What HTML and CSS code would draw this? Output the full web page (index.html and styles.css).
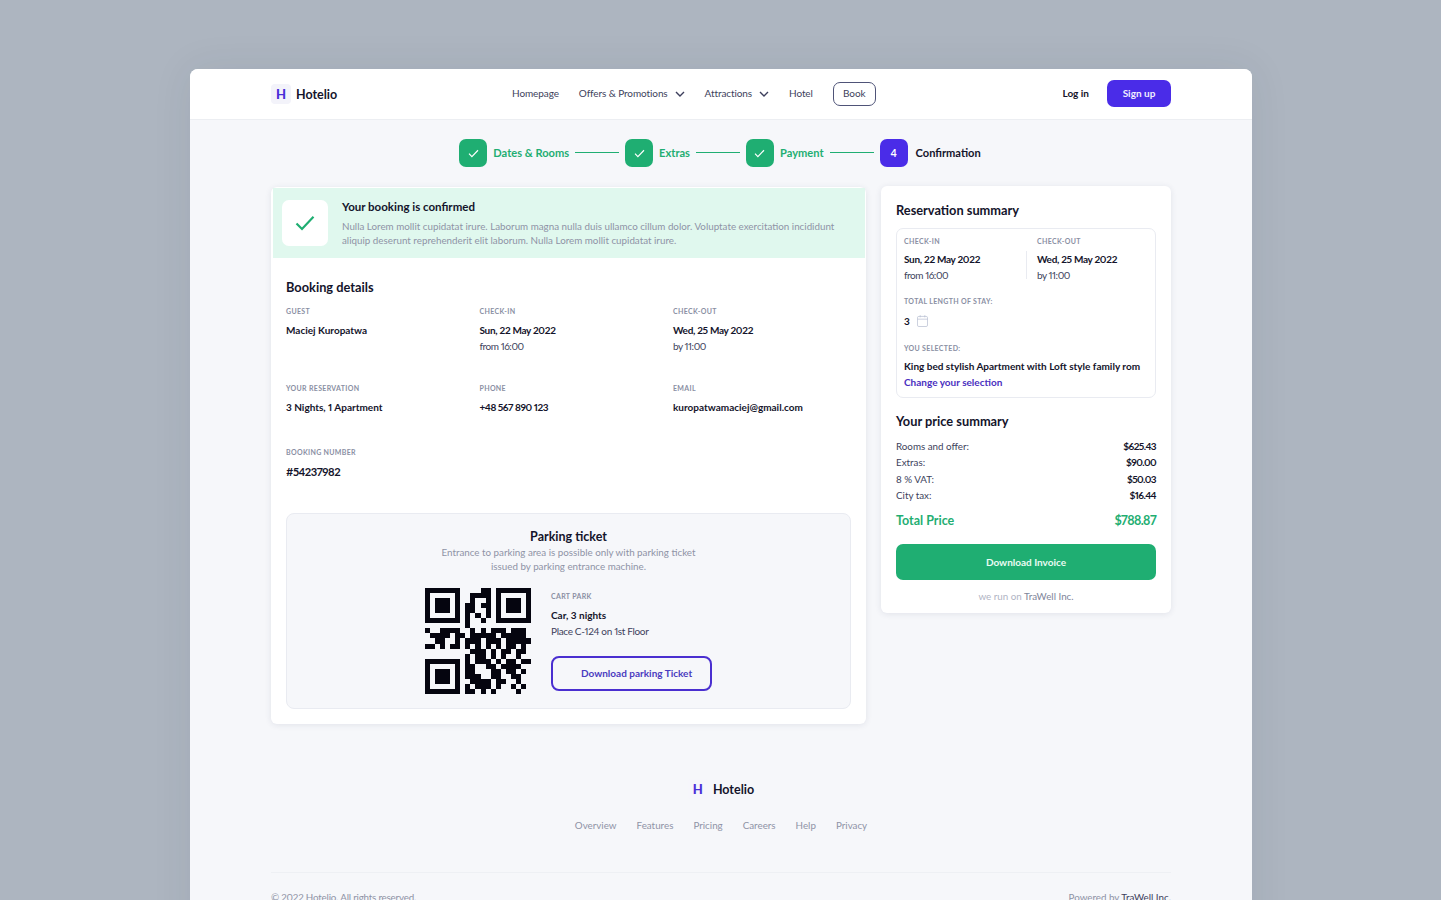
FILE: index.html
```html
<!DOCTYPE html>
<html lang="en">
<head>
<meta charset="utf-8">
<title>Hotelio - Booking confirmed</title>
<link rel="stylesheet" href="styles.css">
</head>
<body>
<div class="app">
  <header class="topbar">
    <div class="wrap topbar-in">
      <a class="logo logo-top"><span class="logo-mark">H</span><span class="logo-name">Hotelio</span></a>
      <nav class="nav">
        <a>Homepage</a>
        <a class="drop">Offers &amp; Promotions <svg class="chev" viewBox="0 0 10 6"><path d="M1 1l4 4 4-4"/></svg></a>
        <a class="drop">Attractions <svg class="chev" viewBox="0 0 10 6"><path d="M1 1l4 4 4-4"/></svg></a>
        <a>Hotel</a>
        <a class="book">Book</a>
      </nav>
      <div class="auth">
        <a class="login">Log in</a>
        <a class="signup">Sign up</a>
      </div>
    </div>
  </header>

  <ol class="steps">
    <li class="step done"><span class="step-ico"><svg viewBox="0 0 12 10"><path d="M1 5.2l3.2 3.2L11 1.4"/></svg></span><span class="step-txt">Dates &amp; Rooms</span></li>
    <li class="step-line"></li>
    <li class="step done"><span class="step-ico"><svg viewBox="0 0 12 10"><path d="M1 5.2l3.2 3.2L11 1.4"/></svg></span><span class="step-txt">Extras</span></li>
    <li class="step-line"></li>
    <li class="step done"><span class="step-ico"><svg viewBox="0 0 12 10"><path d="M1 5.2l3.2 3.2L11 1.4"/></svg></span><span class="step-txt">Payment</span></li>
    <li class="step-line"></li>
    <li class="step current"><span class="step-ico">4</span><span class="step-txt">Confirmation</span></li>
  </ol>

  <main class="wrap content">
    <section class="card card-main">
      <div class="banner">
        <div class="banner-ico"><svg viewBox="0 0 20 16"><path d="M1.5 8.500l5.500 5.500L18.500 1.800"/></svg></div>
        <div class="banner-txt">
          <h2>Your booking is confirmed</h2>
          <p>Nulla Lorem mollit cupidatat irure. Laborum magna nulla duis ullamco cillum dolor. Voluptate exercitation incididunt aliquip deserunt reprehenderit elit laborum. Nulla Lorem mollit cupidatat irure.</p>
        </div>
      </div>
      <div class="details">
        <h3 class="h">Booking details</h3>
        <div class="grid">
          <div class="cell"><div class="lbl">GUEST</div><div class="val">Maciej Kuropatwa</div></div>
          <div class="cell"><div class="lbl">CHECK-IN</div><div class="val tight">Sun, 22 May 2022</div><div class="sub">from 16:00</div></div>
          <div class="cell"><div class="lbl">CHECK-OUT</div><div class="val tight">Wed, 25 May 2022</div><div class="sub">by 11:00</div></div>
          <div class="cell"><div class="lbl">YOUR RESERVATION</div><div class="val">3 Nights, 1 Apartment</div></div>
          <div class="cell"><div class="lbl">PHONE</div><div class="val tighter">+48 567 890 123</div></div>
          <div class="cell"><div class="lbl">EMAIL</div><div class="val">kuropatwamaciej@gmail.com</div></div>
        </div>
        <div class="number"><div class="lbl">BOOKING NUMBER</div><div class="num">#54237982</div></div>
      </div>
      <div class="parking">
        <h3 class="park-h">Parking ticket</h3>
        <p class="park-p">Entrance to parking area is possible only with parking ticket<br>issued by parking entrance machine.</p>
        <div class="park-row">
          <svg class="qr" viewBox="0 0 21 21" shape-rendering="crispEdges">
            <path class="qr-f" d="M0 0h7v7H0zM1 1v5h5V1zM2 2h3v3H2zM14 0h7v7h-7zM15 1v5h5V1zM16 2h3v3h-3zM0 14h7v7H0zM1 15v5h5v-5zM2 16h3v3H2z"/>
            <path class="qr-d" d="M11 .5h2M9 1.500h4M9 2.500h1M12 2.500h1M8 3.500h2M11 3.500h2M8 4.500h2M12 4.500h1M8 5.500h1M10 5.500h1M12 5.500h1M8 6.500h1M11 6.500h1M8 7.500h1M0 8.500h1M3 8.500h4M9 8.500h1M11 8.500h1M13 8.500h3M17 8.500h3M1 9.500h4M6 9.500h2M9 9.500h5M15 9.500h5M2 10.500h2M6 10.500h1M8 10.500h3M12 10.500h3M16 10.500h5M0 11.500h2M3 11.500h1M5 11.500h2M8 11.500h1M10 11.500h1M12 11.500h1M14 11.500h1M16 11.500h2M19 11.500h1M9 12.500h3M13 12.500h1M15 12.500h2M18 12.500h2M8 13.500h1M10 13.500h2M13 13.500h1M15 13.500h1M18 13.500h1M8 14.500h1M10 14.500h3M14 14.500h1M16 14.500h2M19 14.500h2M8 15.500h2M12 15.500h2M15 15.500h4M8 16.500h2M13 16.500h2M16 16.500h2M19 16.500h1M8 17.500h3M13 17.500h2M17 17.500h2M9 18.500h4M14 18.500h2M18 18.500h1M8 19.500h1M10 19.500h3M14 19.500h1M17 19.500h1M19 19.500h1M8 20.500h2M11 20.500h1M13 20.500h1M18 20.500h1"/>
          </svg>
          <div class="park-info">
            <div class="lbl">CART PARK</div>
            <div class="val">Car, 3 nights</div>
            <div class="sub sub-place">Place C-124 on 1st Floor</div>
            <a class="btn-outline">Download parking Ticket</a>
          </div>
        </div>
      </div>
    </section>

    <aside class="card card-side">
      <h3 class="h">Reservation summary</h3>
      <div class="res">
        <div class="res-dates">
          <div class="res-col"><div class="lbl">CHECK-IN</div><div class="val tight">Sun, 22 May 2022</div><div class="sub">from 16:00</div></div>
          <div class="res-col res-col2"><div class="lbl">CHECK-OUT</div><div class="val tight">Wed, 25 May 2022</div><div class="sub">by 11:00</div></div>
        </div>
        <div class="lbl res-l2">TOTAL LENGTH OF STAY:</div>
        <div class="stay"><span>3</span><svg class="cal" viewBox="0 0 12 13"><rect x=".5" y="1.500" width="11" height="11" rx="1.500"/><path d="M.5 4.500h11M3.500 .2v2.300M8.500 .2v2.300"/></svg></div>
        <div class="lbl res-l3">YOU SELECTED:</div>
        <div class="val res-room">King bed stylish Apartment with Loft style family rom</div>
        <a class="change">Change your selection</a>
      </div>
      <h3 class="h h-price">Your price summary</h3>
      <div class="prices">
        <div class="price"><span>Rooms and offer:</span><b>$625.43</b></div>
        <div class="price"><span>Extras:</span><b>$90.00</b></div>
        <div class="price"><span>8 % VAT:</span><b>$50.03</b></div>
        <div class="price"><span>City tax:</span><b>$16.44</b></div>
      </div>
      <div class="total"><span>Total Price</span><span class="total-v">$788.87</span></div>
      <a class="btn-green">Download Invoice</a>
      <div class="run">we run on <span>TraWell Inc.</span></div>
    </aside>
  </main>

  <footer class="wrap footer">
    <a class="logo logo-foot"><span class="logo-mark">H</span><span class="logo-name">Hotelio</span></a>
    <nav class="foot-nav"><a>Overview</a><a>Features</a><a>Pricing</a><a>Careers</a><a>Help</a><a>Privacy</a></nav>
    <div class="foot-bottom"><span class="copy">© 2022 Hotelio. All rights reserved.</span><span>Powered by <b>TraWell Inc.</b></span></div>
  </footer>
</div>
</body>
</html>
```
FILE: styles.css
```css
* { box-sizing: border-box; }
html, body { margin: 0; height: 900px; overflow: hidden; }
body { background: #adb5c0; font-family: "Lato", "Noto Sans", sans-serif; color: #14142b; font-size: 11px; font-variant-numeric: proportional-nums; }
h2, h3, p, ol { margin: 0; padding: 0; }
a { color: inherit; text-decoration: none; }
.app { width: 1062px; margin: 69px 0 0 190px; background: #f6f7fa; border-radius: 8px 8px 0 0; box-shadow: 0 0 40px rgba(40,50,70,.08); height: 900px; }
.wrap { width: 900px; margin: 0 auto; }

.topbar { height: 51px; background: #fff; border-bottom: 1px solid #eceef2; border-radius: 8px 8px 0 0; }
.topbar-in { display: flex; align-items: center; height: 50px; }
.logo { display: flex; align-items: center; font-weight: 700; font-size: 12.500px; }
.logo-top { width: 241px; }
.logo-mark { width: 20px; height: 20px; border-radius: 4px; background: #f3f3fa; color: #4a2fd8; display: flex; align-items: center; justify-content: center; font-size: 13px; font-weight: 900; margin-right: 5px; }
.nav { display: flex; align-items: center; gap: 20px; color: #3d3f5c; font-size: 10px; letter-spacing: -.1px; }
.nav > a { padding-bottom: 2px; }
.drop { display: flex; align-items: center; }
.chev { width: 10px; height: 6px; margin-left: 7px; margin-top: 2px; fill: none; stroke: #3d3f5c; stroke-width: 1.400; }
.nav > .book { height: 24px; width: 43px; margin-top: -1px; border: 1px solid #4f5478; border-radius: 7px; display: flex; align-items: center; justify-content: center; }
.auth { margin-left: auto; display: flex; align-items: center; gap: 18px; font-size: 10px; font-weight: 700; }
.login { padding-bottom: 2px; }
.signup { width: 64px; height: 27px; margin-top: -1px; padding-bottom: 1px; background: #4a2ce8; color: #f0eeff; border-radius: 7px; display: flex; align-items: center; justify-content: center; }

.steps { list-style: none; display: flex; align-items: center; justify-content: center; height: 28px; margin: 19px 0 0 -2px; font-size: 11.100px; font-weight: 700; }
.step { display: flex; align-items: center; gap: 6px; }
.step-txt { padding-bottom: 2px; }
.done { color: #1fae72; }
.current { gap: 8px; }
.step-ico { width: 28px; height: 28px; border-radius: 7px; display: flex; align-items: center; justify-content: center; background: #1fae72; color: #fff; font-size: 10.500px; }
.step-ico svg { width: 11px; height: 9px; fill: none; stroke: #fff; stroke-width: 1.300; }
.current .step-ico { background: #4a2ce8; }
.step-line { width: 44px; height: 1.500px; background: #1fae72; margin: 0 6px 1px; }

.content { display: flex; align-items: flex-start; gap: 15px; margin-top: 19px; }
.card { background: #fff; border-radius: 6px; box-shadow: 0 1px 6px rgba(40,50,90,.1); }
.card-main { width: 595px; height: 537px; margin-top: 1px; padding: 1px 1px 0 2px; }
.card-side { width: 290px; height: 427px; padding: 17px 15px 0; }

.banner { height: 70px; background: #e0f8ee; display: flex; padding-left: 9px; padding-top: 12px; }
.banner-ico { width: 46px; height: 46px; border-radius: 7px; background: #fff; display: flex; align-items: center; justify-content: center; margin-right: 14px; }
.banner-ico svg { width: 20px; height: 16px; fill: none; stroke: #1fae72; stroke-width: 2.200; }
.banner-txt { width: 505px; margin-top: -1px; }
.banner-txt h2 { font-size: 11.500px; font-weight: 700; line-height: 16px; margin-bottom: 4px; }
.banner-txt p { font-size: 9.800px; line-height: 14px; color: #8f93a6; }

.details { padding: 22px 0 0 13px; }
.h { font-size: 12.800px; font-weight: 700; line-height: 14px; padding-bottom: 2px; }
.grid { display: grid; grid-template-columns: 193.500px 193.500px 160px; grid-auto-rows: 77px; margin-top: 11px; }
.lbl { font-size: 7px; letter-spacing: .33px; line-height: 10px; color: #8a8fa3; font-weight: 700; }
.cell .lbl, .number .lbl { line-height: 8px; padding-bottom: 2px; }
.val { font-size: 10px; font-weight: 700; line-height: 16px; margin-top: 5px; }
.tight { letter-spacing: -.3px; }
.tighter { letter-spacing: -.45px; }
.sub { font-size: 10px; line-height: 16px; color: #3d3f5c; letter-spacing: -.45px; }
.sub-place { letter-spacing: -.33px; }
.number { margin-top: -13px; }
.num { font-size: 11.200px; font-weight: 700; line-height: 16px; margin-top: 6px; letter-spacing: -.45px; }

.parking { width: 565px; height: 196px; margin: 33px 0 0 13px; background: #f6f7fa; border: 1px solid #e9ebf1; border-radius: 8px; padding-top: 15px; text-align: center; }
.park-h { font-size: 12.500px; font-weight: 700; line-height: 15px; padding-bottom: 1px; }
.park-p { font-size: 9.800px; line-height: 14px; color: #8f93a6; margin-top: 0; }
.park-row { display: flex; margin-top: 15px; padding-left: 138px; text-align: left; }
.qr { width: 106px; height: 106px; display: block; }
.qr-f { fill: #05050f; fill-rule: evenodd; }
.qr-d { fill: none; stroke: #05050f; stroke-width: 1; }
.park-info { margin-left: 20px; padding-top: 3px; }
.park-info .val { margin-top: 6px; }
.btn-outline { display: block; width: 161px; height: 35px; margin-top: 17px; border: 2px solid #4a2fd0; border-radius: 8px; color: #4a3bc0; font-size: 10px; font-weight: 700; line-height: 31px; padding-left: 28px; }

.res { height: 170px; margin-top: 9px; border: 1px solid #e9ebf1; border-radius: 7px; padding: 7px 7px 0; }
.res-dates { display: flex; }
.res-col { width: 133px; flex: none; }
.res-col2 { width: 111px; position: relative; }
.res-col2::before { content: ""; position: absolute; left: -11px; top: 15px; width: 1px; height: 28px; background: #e9ebf1; }
.res-l2 { margin-top: 13px; }
.stay { display: flex; align-items: center; gap: 7px; font-size: 10px; font-weight: 700; margin-top: 8px; height: 14px; }
.cal { width: 11px; height: 12px; fill: none; stroke: #b8bfd2; stroke-width: .8; }
.res-l3 { margin-top: 15px; }
.res-room { margin-top: 5px; white-space: nowrap; }
.change { display: block; color: #4a2fc0; font-weight: 700; font-size: 10px; line-height: 16px; }
.h-price { margin-top: 16px; }
.prices { margin-top: 8px; }
.price { display: flex; justify-content: space-between; line-height: 16.300px; font-size: 9.800px; color: #3d3f5c; }
.price b { color: #14142b; font-size: 10px; letter-spacing: -.6px; }
.total { display: flex; justify-content: space-between; color: #1fae72; font-weight: 700; font-size: 12.500px; line-height: 18px; margin-top: 9px; }
.total-v { letter-spacing: -.6px; }
.btn-green { display: flex; align-items: center; justify-content: center; height: 36px; margin-top: 14px; background: #1fae72; color: #e9fbf3; border-radius: 7px; font-size: 10px; font-weight: 700; }
.run { text-align: center; margin-top: 9px; font-size: 9.800px; color: #b0b4c4; line-height: 14px; }
.run span { color: #80859a; }

.footer { margin-top: 55px; }
.logo-foot { justify-content: center; }
.logo-foot .logo-mark { background: #f6f6fb; }
.foot-nav { display: flex; justify-content: center; gap: 20px; margin-top: 19px; font-size: 9.800px; color: #8f93a6; line-height: 14px; }
.foot-bottom { display: flex; justify-content: space-between; border-top: 1px solid #eef0f4; margin-top: 40px; padding-top: 17px; font-size: 9.800px; color: #8f93a6; line-height: 14px; }
.copy { letter-spacing: -.2px; }
.foot-bottom b { color: #3d3f5c; font-weight: 400; }
```
